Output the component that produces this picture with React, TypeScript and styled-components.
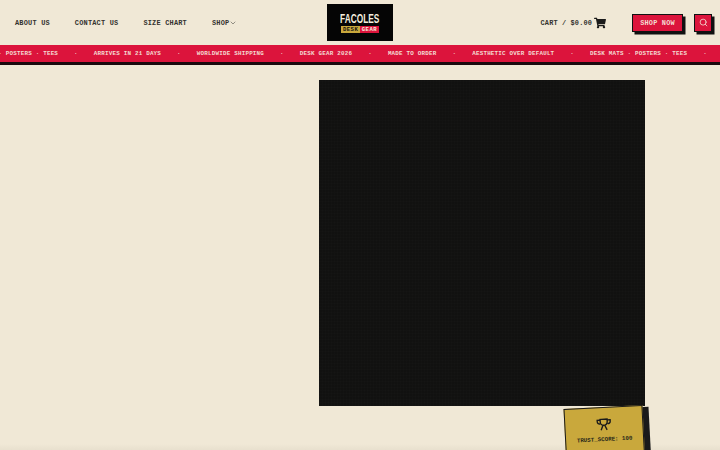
import React from 'react';
import styled, { createGlobalStyle } from 'styled-components';
import { ChevronDown, Search } from 'lucide-react';
import { FaShoppingCart } from 'react-icons/fa';

const GlobalStyle = createGlobalStyle`
  html,
  body {
    margin: 0;
    height: 100%;
    overflow: hidden;
    background: #f0e8d6;
  }
  * {
    box-sizing: border-box;
  }
`;

const mono = `'Liberation Mono', 'DejaVu Sans Mono', monospace`;

const Page = styled.div`
  width: 720px;
  height: 450px;
  overflow: hidden;
  background: linear-gradient(to bottom, #f0e8d6 0, #f0e8d6 444px, #e8e0ce 450px);
  font-family: ${mono};
  color: #1a1a1a;
`;

const Header = styled.header`
  height: 45px;
  display: grid;
  grid-template-columns: 1fr auto 1fr;
  align-items: center;
  padding: 0 8px;
`;

const Nav = styled.nav`
  display: flex;
  align-items: center;
  gap: 25px;
  padding-left: 7px;
`;

const NavLink = styled.a`
  display: flex;
  align-items: center;
  font-size: 6.9px;
  font-weight: 700;
  letter-spacing: 0.22px;
  color: #33322e;
  white-space: nowrap;
`;

const Logo = styled.div`
  width: 66px;
  height: 37px;
  background: #050505;
  display: flex;
  flex-direction: column;
  align-items: center;
  justify-content: center;
  gap: 1px;
`;

const LogoName = styled.div`
  font-family: 'Liberation Sans', sans-serif;
  font-size: 13px;
  line-height: 13px;
  font-weight: 700;
  color: #f4eedf;
  transform: scaleX(0.64);
`;

const LogoTags = styled.div`
  display: flex;
`;

const LogoTag = styled.span<{ $bg: string; $fg: string }>`
  height: 7px;
  padding: 0 1.7px;
  font-size: 5.6px;
  line-height: 7px;
  font-weight: 700;
  letter-spacing: 0.5px;
  background: ${(p) => p.$bg};
  color: ${(p) => p.$fg};
`;

const Actions = styled.div`
  display: flex;
  justify-content: flex-end;
  align-items: center;
`;

const Cart = styled.div`
  display: flex;
  align-items: center;
  gap: 2px;
  margin-right: 26px;
  font-size: 6.9px;
  font-weight: 700;
  letter-spacing: 0.15px;
  color: #33322e;
  white-space: nowrap;
`;

const RedButton = styled.button<{ $square?: boolean }>`
  height: 18px;
  width: ${(p) => (p.$square ? '18px' : '51px')};
  margin-left: ${(p) => (p.$square ? '11px' : '0')};
  padding: 0;
  display: flex;
  align-items: center;
  justify-content: center;
  background: #dc143c;
  border: 1.5px solid #111;
  box-shadow: 2.5px 2.5px 0 #111;
  color: #f3dcd2;
  font-family: ${mono};
  font-size: 6.9px;
  font-weight: 700;
  letter-spacing: 0.2px;
`;

const Banner = styled.div`
  height: 20px;
  background: #dc143c;
  border-bottom: 3px solid #1a0a0e;
  display: flex;
  align-items: center;
  overflow: hidden;
`;

const Track = styled.div`
  display: flex;
  align-items: center;
  gap: 16px;
  margin-left: -39px;
  font-size: 5.9px;
  font-weight: 700;
  letter-spacing: 0.2px;
  color: #f3dcd2;
  white-space: nowrap;
`;

const Main = styled.main`
  display: flex;
  justify-content: flex-end;
  padding: 15px 75px 0 0;
`;

const Poster = styled.div`
  position: relative;
  width: 326px;
  height: 326px;
  background-color: #111110;
  background-image:
    repeating-linear-gradient(0deg, rgba(255, 255, 255, 0.008) 0 1px, transparent 1px 3px),
    repeating-linear-gradient(90deg, rgba(255, 255, 255, 0.008) 0 1px, transparent 1px 3px);
`;

const TrustBadge = styled.div`
  position: absolute;
  left: 246px;
  top: 327px;
  width: 79px;
  height: 60px;
  padding-top: 10px;
  display: flex;
  flex-direction: column;
  align-items: center;
  gap: 5px;
  transform: rotate(-3deg);
  background: #c9a83c;
  border: 1px solid #1a1a1a;
  box-shadow: 6px 2px 0 #1a1a1a;
  color: #2a2a1a;
  font-size: 5.8px;
  font-weight: 700;
`;

const items = [
  'DESK MATS · POSTERS · TEES',
  'ARRIVES IN 21 DAYS',
  'WORLDWIDE SHIPPING',
  'DESK GEAR 2026',
  'MADE TO ORDER',
  'AESTHETIC OVER DEFAULT',
  'DESK MATS · POSTERS · TEES',
];

// cup with two side handles on crossed legs
function TrophyIcon() {
  return (
    <svg width="15" height="13" viewBox="0 0 15 13" fill="none" stroke="#1a1a1a" strokeWidth="1.4">
      <path d="M4 1.2h7v2.6a3.5 3.5 0 0 1-7 0z" />
      <path d="M4 2H1v1.5A2.2 2.2 0 0 0 4 5.6M11 2h3v1.5a2.2 2.2 0 0 1-3 2.1" />
      <path d="M6.5 7.5 4.5 12M8.5 7.5l2 4.5" />
    </svg>
  );
}

export default function App() {
  return (
    <Page>
      <GlobalStyle />
      <Header>
        <Nav>
          <NavLink>ABOUT US</NavLink>
          <NavLink>CONTACT US</NavLink>
          <NavLink>SIZE CHART</NavLink>
          <NavLink>
            SHOP
            <ChevronDown size={8} strokeWidth={1.5} />
          </NavLink>
        </Nav>
        <Logo>
          <LogoName>FACOLES</LogoName>
          <LogoTags>
            <LogoTag $bg="#c9a83c" $fg="#111">DESK</LogoTag>
            <LogoTag $bg="#dc143c" $fg="#f4eedf">GEAR</LogoTag>
          </LogoTags>
        </Logo>
        <Actions>
          <Cart>
            CART / $0.00
            <FaShoppingCart size={12} color="#1a1a1a" />
          </Cart>
          <RedButton>SHOP NOW</RedButton>
          <RedButton $square aria-label="Search">
            <Search size={9} strokeWidth={2.2} />
          </RedButton>
        </Actions>
      </Header>
      <Banner>
        <Track>
          {items.map((item, i) => (
            <React.Fragment key={i}>
              <span>{item}</span>
              <span>·</span>
            </React.Fragment>
          ))}
        </Track>
      </Banner>
      <Main>
        <Poster>
          <TrustBadge>
            <TrophyIcon />
            <span>TRUST_SCORE: 100</span>
          </TrustBadge>
        </Poster>
      </Main>
    </Page>
  );
}
